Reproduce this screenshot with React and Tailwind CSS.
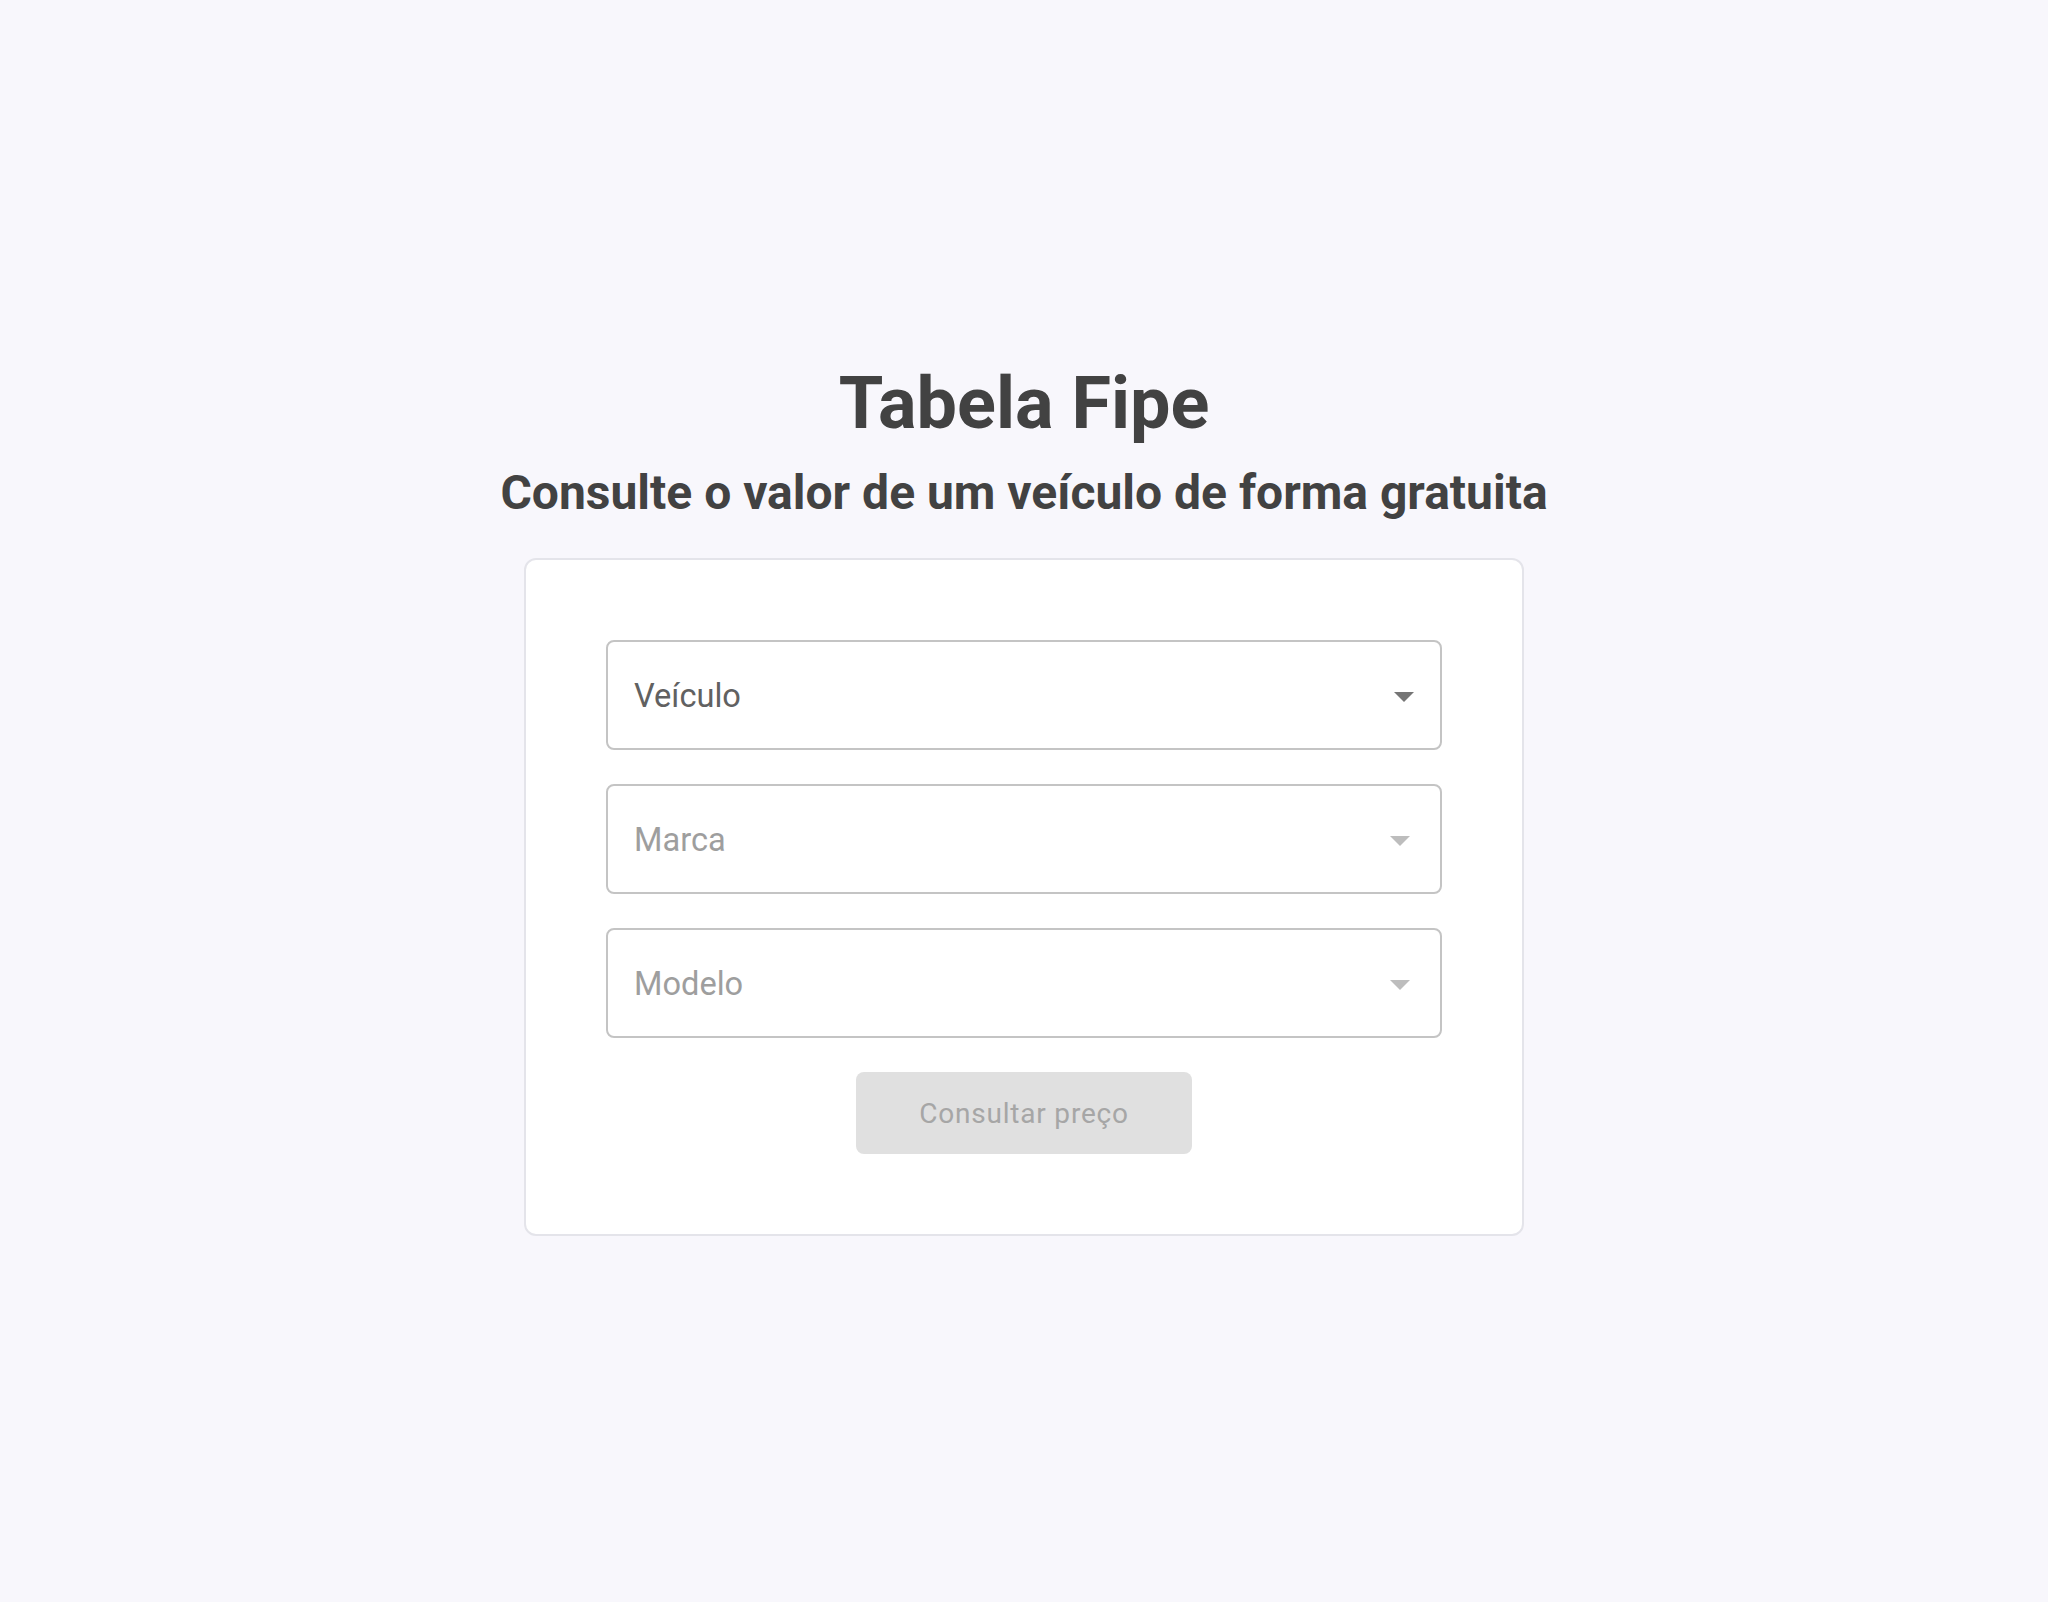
import React, { useState } from 'react';

const fields = [
  { label: 'Veículo', disabled: false },
  { label: 'Marca', disabled: true },
  { label: 'Modelo', disabled: true },
];

const Arrow = ({ disabled }) => (
  <svg width="20" height="10" viewBox="0 0 20 10" className="shrink-0">
    <path d="M0 0 L20 0 L10 10 Z" fill={disabled ? '#bdbdbd' : '#757575'} />
  </svg>
);

const SelectField = ({ label, disabled }) => (
  <div
    className={`h-[110px] w-full border-2 border-[#c4c4c4] rounded-[8px] bg-white flex items-center justify-between pl-[26px] pt-[3px] ${
      disabled ? 'pr-[30px]' : 'pr-[26px]'
    }`}
  >
    <span className={`text-[32.6px] ${disabled ? 'text-[#9e9e9e]' : 'text-[#616161]'}`}>{label}</span>
    <Arrow disabled={disabled} />
  </div>
);

const App = () => {
  const [vehicle] = useState('');

  return (
    <div
      className="min-h-screen bg-[#f8f7fc] flex flex-col items-center pt-[362px] text-[#424242]"
      style={{ fontFamily: 'Roboto, "Noto Sans", sans-serif' }}
    >
      <h1 className="text-[72px] font-bold leading-[84px]">Tabela Fipe</h1>
      <h2 className="text-[48px] font-bold leading-[56px] mt-[19px]">
        Consulte o valor de um veículo de forma gratuita
      </h2>

      {/* Form card */}
      <div className="w-[1000px] mt-[37px] bg-white border-2 border-[#e4e4ea] rounded-[12px] p-[80px] flex flex-col items-center">
        <div className="w-full flex flex-col gap-[34px]">
          {fields.map(f => (
            <SelectField key={f.label} label={f.label} disabled={f.disabled} />
          ))}
        </div>
        <button
          disabled={!vehicle}
          className="mt-[34px] w-[336px] h-[82px] pt-[2px] rounded-[8px] bg-[#e0e0e0] text-[#a6a6a6] text-[28px] tracking-[0.8px]"
        >
          Consultar preço
        </button>
      </div>
    </div>
  );
};

export default App;
